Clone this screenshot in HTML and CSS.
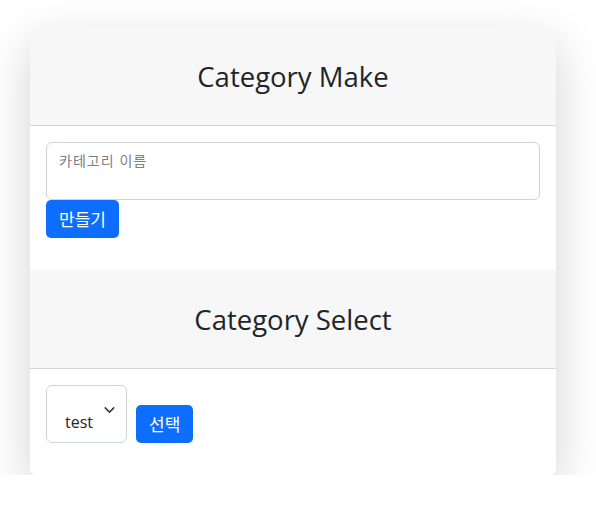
FILE: index.html
```html
<!DOCTYPE html>
<html lang="ko">
<head>
<meta charset="utf-8">
<title>Category</title>
<link rel="stylesheet" href="styles.css">
</head>
<body>
<div class="page">
  <div class="card">
    <div class="card-header"><h2 class="title">Category Make</h2></div>
    <div class="card-body">
      <div class="textarea"><span class="placeholder">카테고리 이름</span></div>
      <div class="row-start"><button class="btn">만들기</button></div>
    </div>
    <div class="card-header"><h2 class="title">Category Select</h2></div>
    <div class="card-body select-row">
      <div class="select">
        <span class="select-text">test</span>
        <svg class="chevron" width="12" height="7" viewBox="0 0 12 7"><polyline points="1,1 6,6 11,1" fill="none" stroke="#343a40" stroke-width="1.8" stroke-linecap="round" stroke-linejoin="round"/></svg>
      </div>
      <button class="btn">선택</button>
    </div>
  </div>
</div>
</body>
</html>
```
FILE: styles.css
```css
* { box-sizing: border-box; }
html, body { margin: 0; padding: 0; background: #ffffff; }
body {
  font-family: "Open Sans", "Noto Sans CJK KR", sans-serif;
  color: #212529;
}
.page {
  padding: 27px 40px 0 30px;
}
.card {
  width: 526px;
  background: #ffffff;
  border-radius: 6px;
  box-shadow: 0 16px 48px rgba(0, 0, 0, 0.175);
  overflow: hidden;
}
.card-header {
  background: #f7f7f7;
  border-bottom: 1px solid #d6d6d6;
  height: 99px;
  display: flex;
  align-items: center;
  justify-content: center;
}
.title {
  margin: 0;
  font-size: 27.5px;
  font-weight: 400;
  line-height: 1.2;
  color: #212529;
}
.card-body {
  padding: 16px 16px 32px 16px;
}
.textarea {
  height: 58px;
  border: 1px solid #ced4da;
  border-radius: 6px;
  padding: 6px 12px;
}
.placeholder {
  font-family: "Noto Sans CJK KR", sans-serif;
  font-size: 14px;
  letter-spacing: 1px;
  line-height: 21px;
  color: #7a8087;
}
.row-start { display: flex; }
.btn {
  display: inline-block;
  font-family: "Noto Sans CJK KR", sans-serif;
  font-size: 17px;
  line-height: 24px;
  padding: 7px 13px;
  height: 38px;
  border: 0;
  border-radius: 5px;
  background: #0d6efd;
  color: #ffffff;
}
.select-row {
  display: flex;
  align-items: flex-end;
  gap: 9px;
}
.select {
  height: 58px;
  width: 81px;
  border: 1px solid #ced4da;
  border-radius: 6px;
  display: flex;
  align-items: flex-end;
  padding: 0 12px 8px 18px;
  gap: 11px;
}
.select-text {
  font-size: 16px;
  line-height: 24px;
  color: #212529;
}
.chevron {
  align-self: center;
  flex: none;
  width: 11px;
  height: 6px;
}
```
